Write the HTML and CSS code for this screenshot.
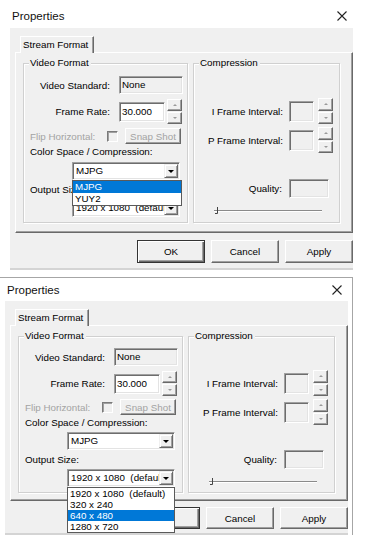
FILE: index.html
```html
<!DOCTYPE html>
<html>
<head>
<meta charset="utf-8">
<title>Properties</title>
<link rel="stylesheet" href="styles.css">
</head>
<body>
<div class="shot shot1">
  <div class="titlebar"><span>Properties</span><svg class="close" viewBox="0 0 10 10"><path d="M0.5 0.5 L9.5 9.5 M9.5 0.5 L0.5 9.5"/></svg></div>
  <div class="dlg">
    <div class="tabs"><div class="tab">Stream Format</div></div>
    <div class="panel">
      <div class="group g-video">
        <div class="legend">Video Format</div>
        <div class="row r-vs"><span class="lbl">Video Standard:</span><span class="edit ro vs">None</span></div>
        <div class="row r-fr"><span class="lbl">Frame Rate:</span><span class="edit fr">30.000</span><span class="spin"><span class="sb up"></span><span class="sb dn"></span></span></div>
        <div class="row r-flip"><span class="lbl-flip dis">Flip Horizontal:</span><span class="check"></span><span class="btn snap dis">Snap Shot</span></div>
        <div class="txt t-cs">Color Space / Compression:</div>
        <div class="combo c-cs"><span class="ctext">MJPG</span><span class="cbtn"></span>
          <div class="list list1"><div class="li sel">MJPG</div><div class="li">YUY2</div></div>
        </div>
        <div class="txt t-os">Output Size:</div>
        <div class="combo c-os"><span class="ctext">1920 x 1080  (default)</span><span class="cbtn"></span></div>
      </div>
      <div class="group g-comp">
        <div class="legend">Compression</div>
        <div class="row r-if"><span class="lbl-c">I Frame Interval:</span><span class="edit ro sm"></span><span class="spin sp-c"><span class="sb up"></span><span class="sb dn"></span></span></div>
        <div class="row r-pf"><span class="lbl-c">P Frame Interval:</span><span class="edit ro sm"></span><span class="spin sp-c"><span class="sb up"></span><span class="sb dn"></span></span></div>
        <div class="row r-q"><span class="lbl-q">Quality:</span><span class="edit ro q"></span></div>
        <svg class="slider" viewBox="0 0 110 10"><path class="trk1" d="M0 5.5 H108"/><path class="trk2" d="M0 6.5 H108"/><path class="thumb" d="M1 8.5 H3.5 V2"/></svg>
      </div>
    </div>
    <div class="buttons"><span class="btn def">OK</span><span class="btn">Cancel</span><span class="btn">Apply</span></div>
  </div>
</div>

<div class="shot shot2">
  <div class="titlebar t2"><span>Properties</span><svg class="close" viewBox="0 0 10 10"><path d="M0.5 0.5 L9.5 9.5 M9.5 0.5 L0.5 9.5"/></svg></div>
  <div class="dlg">
    <div class="tabs"><div class="tab">Stream Format</div></div>
    <div class="panel">
      <div class="group g-video">
        <div class="legend">Video Format</div>
        <div class="row r-vs"><span class="lbl">Video Standard:</span><span class="edit ro vs">None</span></div>
        <div class="row r-fr"><span class="lbl">Frame Rate:</span><span class="edit fr">30.000</span><span class="spin"><span class="sb up"></span><span class="sb dn"></span></span></div>
        <div class="row r-flip"><span class="lbl-flip dis">Flip Horizontal:</span><span class="check"></span><span class="btn snap dis">Snap Shot</span></div>
        <div class="txt t-cs">Color Space / Compression:</div>
        <div class="combo c-cs"><span class="ctext">MJPG</span><span class="cbtn"></span></div>
        <div class="txt t-os">Output Size:</div>
        <div class="combo c-os"><span class="ctext">1920 x 1080  (default)</span><span class="cbtn"></span>
          <div class="list list2"><div class="li">1920 x 1080  (default)</div><div class="li">320 x 240</div><div class="li sel">640 x 480</div><div class="li">1280 x 720</div></div>
        </div>
      </div>
      <div class="group g-comp">
        <div class="legend">Compression</div>
        <div class="row r-if"><span class="lbl-c">I Frame Interval:</span><span class="edit ro sm"></span><span class="spin sp-c"><span class="sb up"></span><span class="sb dn"></span></span></div>
        <div class="row r-pf"><span class="lbl-c">P Frame Interval:</span><span class="edit ro sm"></span><span class="spin sp-c"><span class="sb up"></span><span class="sb dn"></span></span></div>
        <div class="row r-q"><span class="lbl-q">Quality:</span><span class="edit ro q"></span></div>
        <svg class="slider" viewBox="0 0 110 10"><path class="trk1" d="M0 5.5 H108"/><path class="trk2" d="M0 6.5 H108"/><path class="thumb" d="M1 8.5 H3.5 V2"/></svg>
      </div>
    </div>
    <div class="buttons"><span class="btn def">OK</span><span class="btn">Cancel</span><span class="btn">Apply</span></div>
  </div>
</div>
</body>
</html>
```

FILE: styles.css
```css
* { box-sizing: border-box; }
html, body { margin: 0; padding: 0; background: #fff; }
body {
  width: 367px; height: 550px; overflow: hidden;
  font-family: "Liberation Sans", Arial, sans-serif;
  font-size: 9.8px; color: #000;
}

/* window shells */
.shot1 { width: 343px; margin-left: 10px; }
.shot2 {
  width: 353px; margin-top: 7px;
  padding: 0 4px 0 5px;
  border-top: 1px solid #a6a6a6;
  border-right: 1px solid #a6a6a6;
}
.titlebar {
  height: 28px; padding: 4px 6px 0 2px;
  display: flex; align-items: center; justify-content: space-between;
  font-size: 11.5px; color: #111;
}
.titlebar.t2 { height: 23px; padding-top: 0; }
.close { width: 10px; height: 10px; }
.close path { stroke: #222; stroke-width: 1.1; fill: none; }

.dlg {
  background: #f0f0f0;
  padding: 8px 0 5px 5px;
  border-bottom: 2px solid #d4d4d4;
}

/* tab */
.tabs { display: flex; height: 16px; padding-left: 5px; }
.tab {
  position: relative; z-index: 1;
  height: 17px; line-height: 15px;
  padding: 0 5px 0 2px;
  background: #f0f0f0;
  border-top: 1px solid #fff; border-left: 1px solid #fff;
  border-right: 1px solid #696969;
  box-shadow: inset -1px 0 #a0a0a0;
}
.panel {
  height: 181px; display: flex; gap: 5px;
  padding: 10px 0 0 7px;
  border-top: 1px solid #fff; border-left: 1px solid #fff;
  border-right: 1px solid #696969; border-bottom: 1px solid #696969;
  box-shadow: inset -1px -1px #a0a0a0;
}

/* group boxes */
.group {
  height: 160px;
  border: 1px solid #d0d0d0;
  box-shadow: inset 1px 1px #fff, 1px 1px #fff;
}
.g-video { width: 165px; }
.g-comp { width: 147px; }
.legend {
  width: max-content; line-height: 12px;
  margin: -7px 0 0 5px; padding: 0 2px 0 1px;
  background: #f0f0f0;
}

.row { display: flex; align-items: center; }
.lbl { width: 86px; margin-right: 9px; text-align: right; flex: none; }
.dis { color: #a3a3a3; }

/* sunken edit */
.edit {
  flex: none; display: block;
  border-top: 1px solid #a0a0a0; border-left: 1px solid #a0a0a0;
  border-bottom: 1px solid #fff; border-right: 1px solid #fff;
  box-shadow: inset 1px 1px #6d6d6d, inset -1px -1px #e3e3e3;
  background: #fff; padding-left: 2px; white-space: nowrap;
}
.edit.ro { background: #f0f0f0; }
.edit.vs { width: 64px; height: 18px; line-height: 16px; }
.edit.fr { width: 46px; height: 20px; line-height: 18px; }
.edit.sm { width: 25px; height: 21px; }
.edit.q { width: 40px; height: 19px; }

/* spinner */
.spin { flex: none; width: 15px; height: 25px; margin-left: 2px; display: flex; flex-direction: column; gap: 1px; }
.sp-c { margin-left: 4px; height: 26px; }
.sb {
  flex: 1; display: flex; align-items: center; justify-content: center;
  background: #f0f0f0;
  border-top: 1px solid #fff; border-left: 1px solid #fff;
  border-right: 1px solid #696969; border-bottom: 1px solid #696969;
  box-shadow: inset -1px -1px #a0a0a0;
}
.sb::after { content: ""; width: 0; height: 0; border-left: 2px solid transparent; border-right: 2px solid transparent; }
.sb.up::after { border-bottom: 2px solid #9a9a9a; }
.sb.dn::after { border-top: 2px solid #9a9a9a; }

/* video group rows */
.r-vs { margin-top: 7px; height: 18px; }
.r-fr { margin-top: 5px; height: 25px; }
.r-flip { margin-top: 4px; height: 16px; }
.lbl-flip { width: 83px; padding-left: 6px; flex: none; white-space: nowrap; }
.check {
  flex: none; width: 11px; height: 11px;
  border-top: 1px solid #7a7a7a; border-left: 1px solid #7a7a7a;
  border-right: 1px solid #fff; border-bottom: 1px solid #fff;
  box-shadow: inset 1px 1px #a0a0a0;
}
.btn {
  flex: none; display: flex; align-items: center; justify-content: center;
  background: #f0f0f0;
  border-top: 1px solid #fff; border-left: 1px solid #fff;
  border-right: 1px solid #696969; border-bottom: 1px solid #696969;
  box-shadow: inset -1px -1px #a0a0a0;
}
.btn.snap { width: 56px; height: 16px; margin-left: 7px; }
.txt { line-height: 12px; margin-left: 6px; }
.t-cs { margin-top: 2px; }
.t-os { margin-top: 4px; }

/* combo */
.combo {
  position: relative; display: flex;
  width: 108px; height: 18px; margin-left: 48px;
  background: #fff;
  border-top: 1px solid #a0a0a0; border-left: 1px solid #a0a0a0;
  border-bottom: 1px solid #fff; border-right: 1px solid #fff;
  box-shadow: inset 1px 1px #6d6d6d, inset -1px -1px #e3e3e3;
  padding: 1px 1px 1px 2px;
}
.c-cs { margin-top: 4px; }
.c-os { margin-top: 3px; }
.ctext { flex: 1; overflow: hidden; white-space: pre; line-height: 14px; padding-left: 1px; }
.cbtn {
  flex: none; width: 14px;
  display: flex; align-items: center; justify-content: center;
  background: #f0f0f0;
  border-top: 1px solid #f0f0f0; border-left: 1px solid #f0f0f0;
  border-right: 1px solid #696969; border-bottom: 1px solid #696969;
  box-shadow: inset 1px 1px #fff, inset -1px -1px #a0a0a0;
}
.cbtn::after { content: ""; border-left: 3px solid transparent; border-right: 3px solid transparent; border-top: 3px solid #000; }

/* drop-down lists */
.list {
  position: absolute; z-index: 5; left: -1px; top: calc(100% + 1px);
  background: #fff; border: 1px solid #5a5a5a;
}
.list1 { width: 110px; }
.list2 { width: 108px; }
.li { height: 12px; line-height: 12px; padding-left: 2px; white-space: pre; }
.list2 .li { height: 11px; line-height: 11px; }
.li.sel { background: #0078d7; color: #fff; }

/* compression group */
.r-if { margin-top: 29px; height: 26px; }
.r-pf { margin-top: 3px; height: 26px; }
.lbl-c { width: 89px; margin-right: 6px; text-align: right; flex: none; white-space: nowrap; }
.r-q { margin-top: 26px; height: 19px; }
.lbl-q { width: 88px; margin-right: 7px; text-align: right; flex: none; }
.slider { display: block; width: 110px; height: 10px; margin: 7px 0 0 20px; }
.trk1 { stroke: #8a8a8a; stroke-width: 1; }
.trk2 { stroke: #fff; stroke-width: 1; }
.thumb { stroke: #444; stroke-width: 1; fill: none; }

/* bottom buttons */
.buttons { display: flex; justify-content: flex-end; gap: 6px; margin-top: 7px; }
.buttons .btn { width: 68px; height: 23px; }
.btn.def {
  border: 1px solid #333;
  box-shadow: inset 1px 1px #fff, inset -1px -1px #696969, inset -2px -2px #a0a0a0;
}

/* the second capture is a few pixels shorter */
.shot2 .dlg { padding-bottom: 4px; }
.shot2 .panel { height: 176px; }
.shot2 .group { height: 157px; }
.shot2 .r-vs { margin-top: 6px; }
.shot2 .r-flip { margin-top: 3px; }
.shot2 .c-cs { margin-top: 3px; }
.shot2 .r-if { margin-top: 28px; }
.shot2 .r-q { margin-top: 25px; }
.shot2 .buttons { margin-top: 6px; }
.shot2 .buttons .btn { height: 22px; }
```
